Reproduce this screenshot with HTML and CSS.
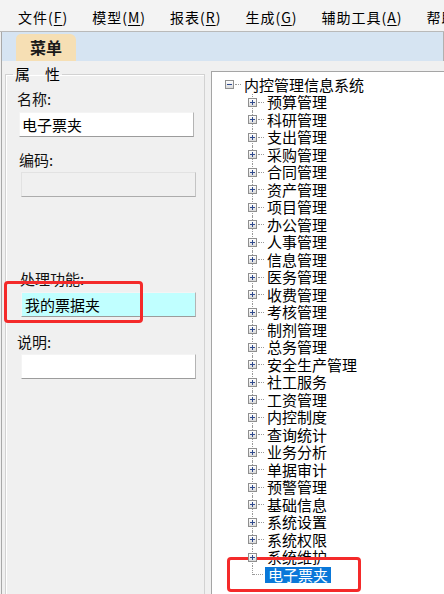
FILE: index.html
```html
<!DOCTYPE html>
<html lang="zh-CN">
<head>
    <meta charset="UTF-8">
    <meta name="viewport" content="width=device-width, initial-scale=1.0">
    <title>菜单</title>
    <link rel="stylesheet" href="styles.css">
</head>
<body>
    <!-- Menu bar -->
    <div class="menubar">
        <span class="menu-item">文件(<u>F</u>)</span>
        <span class="menu-item">模型(<u>M</u>)</span>
        <span class="menu-item">报表(<u>R</u>)</span>
        <span class="menu-item">生成(<u>G</u>)</span>
        <span class="menu-item">辅助工具(<u>A</u>)</span>
        <span class="menu-item">帮助(<u>H</u>)</span>
    </div>

    <div class="workspace">
        <div class="tabstrip">
            <div class="tab">菜单</div>
        </div>

        <div class="main">
            <!-- Properties -->
            <div class="left">
                <fieldset class="props">
                    <legend>属　性</legend>
                    <label class="field-label first">名称:</label>
                    <input class="field" type="text" value="电子票夹">

                    <label class="field-label code">编码:</label>
                    <input class="field disabled" type="text" value="" disabled>

                    <label class="field-label func">处理功能:</label>
                    <input class="field cyan" type="text" value="我的票据夹">

                    <label class="field-label note">说明:</label>
                    <input class="field" type="text" value="">
                </fieldset>
            </div>

            <!-- Menu tree -->
            <div class="tree">
                <div class="node root">
                    <span class="box minus"></span><span class="dash"></span><span class="label">内控管理信息系统</span>
                </div>
                <ul class="children">
                    <li class="child"><div class="node"><span class="box plus"></span><span class="dash"></span><span class="label">预算管理</span></div></li>
                    <li class="child"><div class="node"><span class="box plus"></span><span class="dash"></span><span class="label">科研管理</span></div></li>
                    <li class="child"><div class="node"><span class="box plus"></span><span class="dash"></span><span class="label">支出管理</span></div></li>
                    <li class="child"><div class="node"><span class="box plus"></span><span class="dash"></span><span class="label">采购管理</span></div></li>
                    <li class="child"><div class="node"><span class="box plus"></span><span class="dash"></span><span class="label">合同管理</span></div></li>
                    <li class="child"><div class="node"><span class="box plus"></span><span class="dash"></span><span class="label">资产管理</span></div></li>
                    <li class="child"><div class="node"><span class="box plus"></span><span class="dash"></span><span class="label">项目管理</span></div></li>
                    <li class="child"><div class="node"><span class="box plus"></span><span class="dash"></span><span class="label">办公管理</span></div></li>
                    <li class="child"><div class="node"><span class="box plus"></span><span class="dash"></span><span class="label">人事管理</span></div></li>
                    <li class="child"><div class="node"><span class="box plus"></span><span class="dash"></span><span class="label">信息管理</span></div></li>
                    <li class="child"><div class="node"><span class="box plus"></span><span class="dash"></span><span class="label">医务管理</span></div></li>
                    <li class="child"><div class="node"><span class="box plus"></span><span class="dash"></span><span class="label">收费管理</span></div></li>
                    <li class="child"><div class="node"><span class="box plus"></span><span class="dash"></span><span class="label">考核管理</span></div></li>
                    <li class="child"><div class="node"><span class="box plus"></span><span class="dash"></span><span class="label">制剂管理</span></div></li>
                    <li class="child"><div class="node"><span class="box plus"></span><span class="dash"></span><span class="label">总务管理</span></div></li>
                    <li class="child"><div class="node"><span class="box plus"></span><span class="dash"></span><span class="label">安全生产管理</span></div></li>
                    <li class="child"><div class="node"><span class="box plus"></span><span class="dash"></span><span class="label">社工服务</span></div></li>
                    <li class="child"><div class="node"><span class="box plus"></span><span class="dash"></span><span class="label">工资管理</span></div></li>
                    <li class="child"><div class="node"><span class="box plus"></span><span class="dash"></span><span class="label">内控制度</span></div></li>
                    <li class="child"><div class="node"><span class="box plus"></span><span class="dash"></span><span class="label">查询统计</span></div></li>
                    <li class="child"><div class="node"><span class="box plus"></span><span class="dash"></span><span class="label">业务分析</span></div></li>
                    <li class="child"><div class="node"><span class="box plus"></span><span class="dash"></span><span class="label">单据审计</span></div></li>
                    <li class="child"><div class="node"><span class="box plus"></span><span class="dash"></span><span class="label">预警管理</span></div></li>
                    <li class="child"><div class="node"><span class="box plus"></span><span class="dash"></span><span class="label">基础信息</span></div></li>
                    <li class="child"><div class="node"><span class="box plus"></span><span class="dash"></span><span class="label">系统设置</span></div></li>
                    <li class="child"><div class="node"><span class="box plus"></span><span class="dash"></span><span class="label">系统权限</span></div></li>
                    <li class="child"><div class="node"><span class="box plus"></span><span class="dash"></span><span class="label">系统维护</span></div></li>
                    <li class="child leaf"><div class="node"><span class="dash long"></span><span class="label selected">电子票夹</span></div></li>
                </ul>
            </div>
        </div>
    </div>

    <!-- Red annotation marks -->
    <div class="mark mark-func"></div>
    <div class="mark mark-node"></div>
</body>
</html>
```

FILE: styles.css
```css
body {
    margin: 0;
    height: 100vh;
    overflow: hidden;
    display: flex;
    flex-direction: column;
    background-color: #f0f0f0;
    font-family: "Noto Sans CJK SC", "Noto Sans", sans-serif;
    color: #000;
}

/* Top menu */
.menubar {
    height: 32px;
    display: flex;
    align-items: center;
    gap: 24px;
    padding: 2px 0 0 18px;
    box-sizing: border-box;
    background-color: #f3f3f3;
    border-bottom: 1px solid #b9b9b9;
    font-size: 14px;
    letter-spacing: 1px;
    white-space: nowrap;
    flex-shrink: 0;
}

.menu-item u {
    text-decoration-thickness: 1px;
    text-underline-offset: 2px;
}

.workspace {
    flex: 1;
    display: flex;
    flex-direction: column;
    margin-left: 1px;
    border-left: 1px solid #a8a8a8;
    min-height: 0;
}

/* Tab strip */
.tabstrip {
    height: 29px;
    background-color: #d6e4f2;
    padding-left: 14px;
    display: flex;
    align-items: flex-end;
    flex-shrink: 0;
    border-right: 1px solid #b0b0b0;
}

.tab {
    width: 60px;
    height: 27px;
    line-height: 27px;
    text-align: center;
    background-color: #f6dfb4;
    border-radius: 5px 6px 0 0;
    font-size: 16px;
    font-weight: bold;
    color: #1a1a1a;
}

.main {
    flex: 1;
    display: flex;
    min-height: 0;
}

/* Left: properties */
.left {
    width: 203px;
    display: flex;
    flex-direction: column;
    flex-shrink: 0;
}

.props {
    flex: 1;
    margin: 4px 0 -20px 3px;
    width: 200px;
    box-sizing: border-box;
    padding: 7px 0 0 13px;
    border: 1px solid #d2d2d2;
    box-shadow: inset 1px 1px 0 #fff;
    min-width: 0;
}

.props legend {
    margin-left: -6px;
    padding: 0 2px;
    font-size: 15px;
    line-height: 18px;
}

.field-label {
    display: block;
    font-size: 15px;
    line-height: 18px;
    color: #111;
    margin-left: -2px;
}

.field-label.code { margin-top: 14px; margin-left: 0; }
.field-label.func { margin-top: 73px; margin-left: 1px; }
.field-label.note { margin-top: 16px; margin-left: -2px; }

.field {
    display: block;
    width: 175px;
    height: 25px;
    box-sizing: border-box;
    margin: 4px 0 0 0;
    padding: 0 2px;
    font-family: inherit;
    font-size: 15px;
    color: #000;
    background-color: #fff;
    border: 1px solid;
    border-color: #f4f4f4 #b4b4b4 #9c9c9c #f4f4f4;
    outline: none;
}

.field.disabled {
    margin-left: 2px;
    margin-top: 3px;
    background-color: #f0f0f0;
    border-color: #e2e2e2 #c4c4c4 #acacac #e2e2e2;
}

.field.cyan {
    margin-left: 2px;
    padding-left: 3px;
    background-color: #c0ffff;
}

.field-label.note + .field {
    margin-left: 2px;
    margin-top: 3px;
}

/* Right: tree */
.tree {
    flex: 1;
    margin: 10px -20px -20px 6px;
    padding: 4px 0 0 13px;
    background-color: #fff;
    border: 1px solid #a5a5a5;
    font-size: 15px;
    white-space: nowrap;
    overflow: hidden;
}

.node {
    display: flex;
    align-items: center;
    height: 17.5px;
}

.box {
    position: relative;
    z-index: 1;
    width: 9px;
    height: 9px;
    box-sizing: border-box;
    border: 1px solid #8f8f8f;
    background: linear-gradient(#ffffff, #dadada);
    flex-shrink: 0;
}

.box::before {
    content: '';
    position: absolute;
    left: 1px;
    top: 3px;
    width: 5px;
    height: 1px;
    background-color: #2f4a8e;
}

.box.plus::after {
    content: '';
    position: absolute;
    left: 3px;
    top: 1px;
    width: 1px;
    height: 5px;
    background-color: #2f4a8e;
}

.dash {
    width: 6px;
    margin-left: 1px;
    border-top: 1px dotted #9a9a9a;
}

.dash.long {
    width: 10px;
    margin-left: 5px;
}

.label {
    margin-left: 1px;
    padding: 0 2px;
    line-height: 16px;
}

.label.selected {
    margin-left: 2px;
    padding: 0 3px;
    background-color: #0a78d9;
    color: #fff;
}

.children {
    list-style: none;
    margin: 0;
    padding: 0 0 0 23px;
}

.child {
    position: relative;
}

.child::before {
    content: '';
    position: absolute;
    left: 4px;
    top: 0;
    bottom: 0;
    border-left: 1px dotted #9a9a9a;
}

.child.leaf::before {
    bottom: auto;
    height: 9px;
}

/* Red highlight marks drawn over the screenshot */
.mark {
    position: absolute;
    border: 3px solid #f42a2a;
    border-radius: 4px;
    box-sizing: border-box;
}

.mark-func {
    left: 4px;
    top: 281px;
    width: 139px;
    height: 42px;
}

.mark-node {
    left: 227px;
    top: 557px;
    width: 134px;
    height: 35px;
}
```
